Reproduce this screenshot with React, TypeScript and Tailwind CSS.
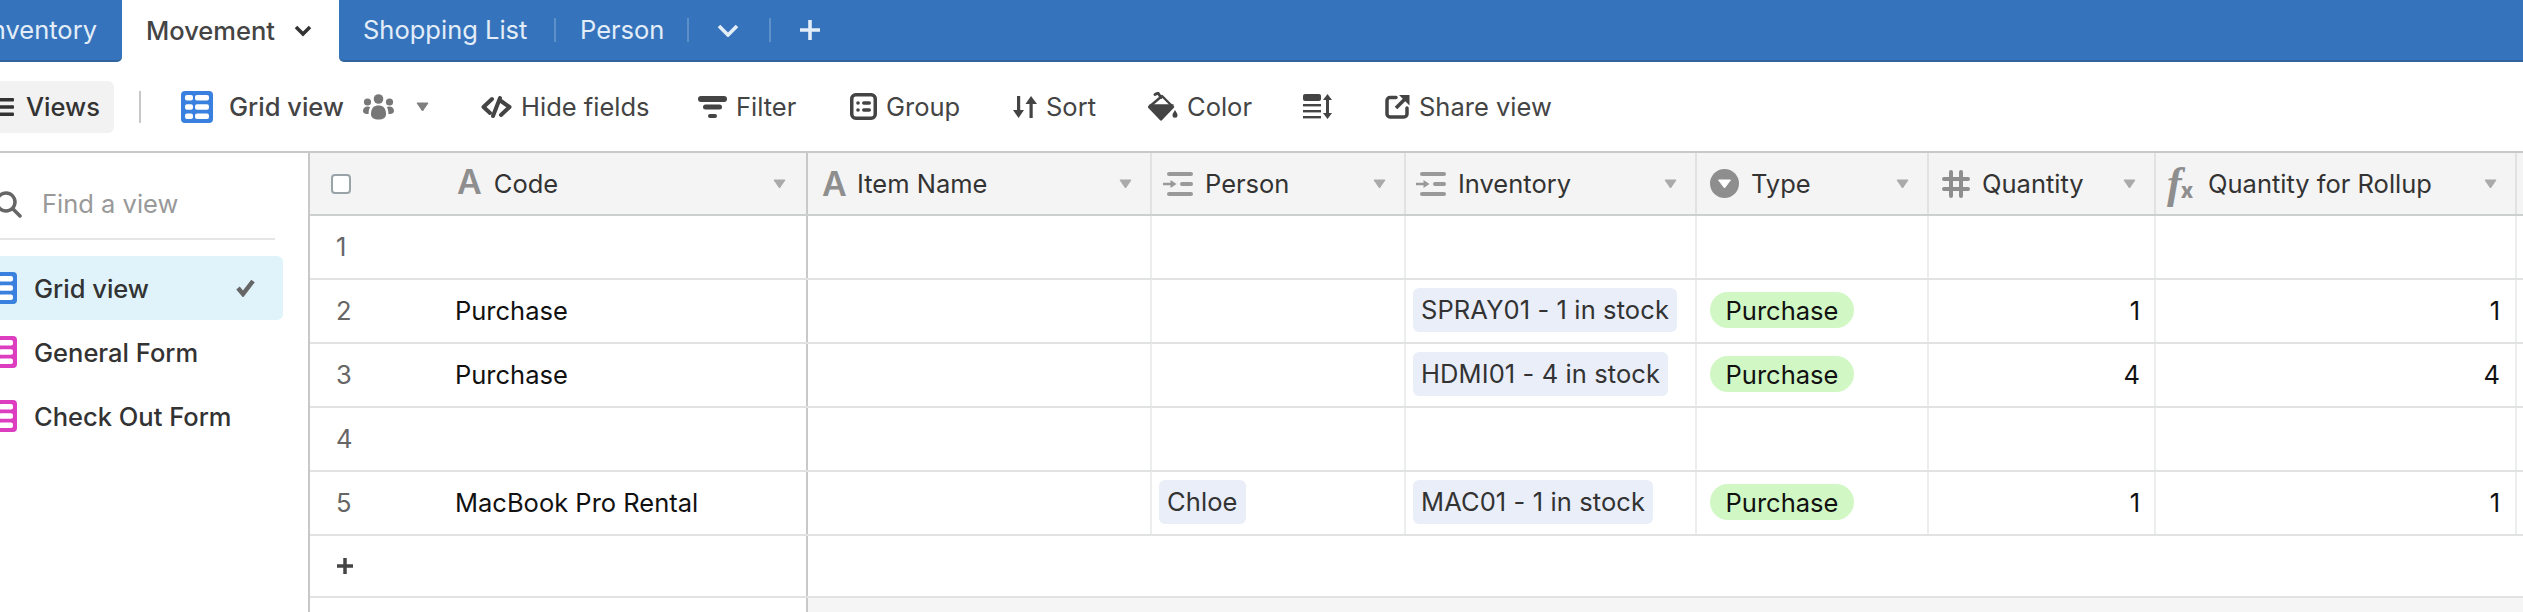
import type { ReactNode } from 'react';

const Caret = ({ color = '#aaaaaa' }: { color?: string }) => (
    <svg width="13" height="10" viewBox="0 0 13 10" className="shrink-0">
        <path d="M1 1h11L6.5 9z" fill={color} stroke={color} strokeWidth="1" strokeLinejoin="round" />
    </svg>
);

const GridIcon = ({ color }: { color: string }) => (
    <svg width="32" height="32" viewBox="0 0 32 32" className="shrink-0">
        <rect width="32" height="32" rx="4" fill={color} />
        <g fill="#fff">
            <rect x="4" y="4" width="8" height="5.500" rx="2" />
            <rect x="14" y="4" width="14" height="5.500" rx="2" />
            <rect x="4" y="13.250" width="8" height="5.500" rx="2" />
            <rect x="14" y="13.250" width="14" height="5.500" rx="2" />
            <rect x="4" y="22.500" width="8" height="5.500" rx="2" />
            <rect x="14" y="22.500" width="14" height="5.500" rx="2" />
        </g>
    </svg>
);

const UsersIcon = () => (
    <svg width="31" height="26" viewBox="0 0 31 26" fill="#777777" className="shrink-0">
        <circle cx="15.5" cy="5" r="4.8" />
        <circle cx="4.5" cy="8" r="3.6" />
        <circle cx="26.5" cy="8" r="3.6" />
        <path d="M8 20c0-6 3-8.500 7.500-8.500S23 14 23 20c0 4-3 5.500-7.500 5.500S8 24 8 20z" />
        <path d="M0 17c0-3 2-4.500 4.500-4.500 1.200 0 2 .3 2.700 .8C6 15 5.600 17 5.600 20c-3 0-5.600-.5-5.600-3z" />
        <path d="M31 17c0-3-2-4.500-4.500-4.500-1.200 0-2 .3-2.700 .8C25 15 25.400 17 25.400 20c3 0 5.600-.5 5.600-3z" />
    </svg>
);

const HideIcon = () => (
    <svg width="31" height="22" viewBox="0 0 31 22" fill="none" stroke="#444444" strokeWidth="4" strokeLinejoin="round" strokeLinecap="round" className="shrink-0">
        <path d="M11 3 2.500 11 9 17" />
        <path d="M20 5 28.500 11 20 19" />
        <path d="M19 2 12 20" />
    </svg>
);

const FilterIcon = () => (
    <svg width="29" height="22" viewBox="0 0 29 22" fill="#444444" className="shrink-0">
        <rect x="0" y="0" width="29" height="6" rx="3" />
        <rect x="5" y="8.500" width="19" height="5" rx="2.500" />
        <rect x="10" y="18" width="9" height="4" rx="2" />
    </svg>
);

const GroupIcon = () => (
    <svg width="27" height="27" viewBox="0 0 27 27" className="shrink-0">
        <rect x="1.750" y="1.750" width="23.500" height="23.500" rx="4" fill="none" stroke="#444444" strokeWidth="3.500" />
        <g fill="#444444">
            <circle cx="8" cy="10" r="1.800" />
            <circle cx="8" cy="17" r="1.800" />
            <rect x="12" y="8.200" width="9" height="3.600" rx="1.800" />
            <rect x="12" y="15.200" width="9" height="3.600" rx="1.800" />
        </g>
    </svg>
);

const SortIcon = () => (
    <svg width="24" height="24" viewBox="0 0 24 24" fill="#444444" className="shrink-0">
        <path d="M4 1h3.200v14H11l-5.400 8L0 15h4z" />
        <path d="M16.500 23h3.200V9H24L18 1l-5.500 8h4z" />
    </svg>
);

const ColorIcon = () => (
    <svg width="30" height="29" viewBox="0 0 30 29" className="shrink-0">
        <path d="M7 2.500 10 1l3 4.500" fill="none" stroke="#444444" strokeWidth="2.800" strokeLinecap="round" strokeLinejoin="round" />
        <path d="M14 4 25 15 13 27.500 1 15z" fill="none" stroke="#444444" strokeWidth="2.400" strokeLinejoin="round" />
        <path d="M2 13h23L13 27.500z" fill="#444444" stroke="#444444" strokeWidth="1.500" strokeLinejoin="round" />
        <path d="M27 18c1.500 2.500 2.500 3.700 2.500 5.200a2.500 2.500 0 0 1-5 0c0-1.500 1-2.700 2.500-5.200z" fill="#444444" />
    </svg>
);

const RowHeightIcon = () => (
    <svg width="29" height="25" viewBox="0 0 29 25" fill="#444444" className="shrink-0">
        <rect x="0" y="0" width="18" height="7" rx="2" />
        <rect x="0" y="10" width="18" height="2.400" />
        <rect x="0" y="16" width="18" height="2.400" />
        <rect x="0" y="22" width="18" height="2.400" />
        <path d="M24.500 0 29 6h-3v13h3l-4.500 6L20 19h3V6h-3z" />
    </svg>
);

const ShareIcon = () => (
    <svg width="25" height="25" viewBox="0 0 25 25" fill="none" stroke="#444444" className="shrink-0">
        <path d="M11 3.500H5a3 3 0 0 0-3 3V20a3 3 0 0 0 3 3h14a3 3 0 0 0 3-3v-6" strokeWidth="3.500" strokeLinecap="round" />
        <path d="M11 14 20 5" strokeWidth="3.600" />
        <path d="M14 1h10.500v10.500z" fill="#444444" stroke="none" />
    </svg>
);

const LinkIcon = () => (
    <svg width="30" height="24" viewBox="0 0 30 24" fill="#999999" className="shrink-0">
        <rect x="4" y="0" width="26" height="4" rx="2" />
        <rect x="17" y="10" width="13" height="4" rx="2" />
        <rect x="4" y="20" width="26" height="4" rx="2" />
        <path d="M0 10.800h7.500V8l6 4-6 4v-2.800H0z" />
    </svg>
);

const SelectIcon = () => (
    <svg width="29" height="29" viewBox="0 0 29 29" className="shrink-0">
        <circle cx="14.500" cy="14.500" r="14.500" fill="#8e8e8e" />
        <path d="M8.500 11h12l-6 8z" fill="#fff" stroke="#fff" strokeWidth="1" strokeLinejoin="round" />
    </svg>
);

const HashIcon = () => (
    <svg width="28" height="28" viewBox="0 0 28 28" fill="none" stroke="#8e8e8e" strokeWidth="4" strokeLinecap="round" className="shrink-0">
        <path d="M9 2v24M19 2v24M2 9h24M2 19h24" />
    </svg>
);

const TextIcon = () => (
    <span className="w-[23px] shrink-0 text-[34px] leading-none font-semibold text-[#8e8e8e]">A</span>
);

const FormulaIcon = () => (
    <span className="w-[29px] shrink-0 flex items-baseline text-[#8e8e8e] leading-none">
        <span className="font-['Liberation_Serif',serif] italic font-bold text-[44px]">f</span>
        <span className="-ml-[1px] font-extrabold text-[21px]">x</span>
    </span>
);

function Tool({ w, icon, label }: { w: string; icon: ReactNode; label?: string }) {
    return (
        <div className={`${w} flex items-center gap-[9px] text-[#444444]`}>
            {icon}
            {label && <span className="pt-[1px]">{label}</span>}
        </div>
    );
}

function Head({ cls, icon, label }: { cls: string; icon: ReactNode; label: string }) {
    return (
        <div className={`${cls} flex items-center pr-[18px] border-r-2 border-[#e1e3e3]`}>
            {icon}
            <span className="ml-[12px] pt-[2px] text-[#333333]">{label}</span>
            <span className="ml-auto"><Caret /></span>
        </div>
    );
}

const Chip = ({ text }: { text: string }) => (
    <span className="-mt-[2px] h-[44px] px-[8px] pt-[1px] flex items-center rounded-[6px] bg-[#e9eef8] text-[#333333] tracking-[0.1px] whitespace-nowrap">{text}</span>
);

const Pill = () => (
    <span className="-mt-[2px] h-[36px] w-[144px] pt-[2px] flex items-center justify-center rounded-full bg-[#d1f7c4] text-[#111111]">Purchase</span>
);

const rows = [
    { n: 1 },
    { n: 2, code: 'Purchase', inv: 'SPRAY01 - 1 in stock', qty: 1 },
    { n: 3, code: 'Purchase', inv: 'HDMI01 - 4 in stock', qty: 4 },
    { n: 4 },
    { n: 5, code: 'MacBook Pro Rental', person: 'Chloe', inv: 'MAC01 - 1 in stock', qty: 1 },
];

const views = [
    { name: 'Grid view', color: '#3a80de', active: true },
    { name: 'General Form', color: '#dd3ec0' },
    { name: 'Check Out Form', color: '#dd3ec0' },
];

const cellLine = 'border-r-2 border-[#eceeee]';

export default function App() {
    return (
        <div className="w-[2523px] h-[612px] overflow-hidden bg-white text-[25.5px] font-['Inter','Liberation_Sans',sans-serif] flex flex-col">
            {/* tabs */}
            <div className="h-[62px] flex shrink-0 text-[#e3edf8]">
                <div className="w-[122px] bg-[#3574bc] border-b-2 border-[#2e659f] rounded-br-[5px] flex items-center justify-end pr-[25px] overflow-hidden">
                    <span>Inventory</span>
                </div>
                <div className="w-[217px] bg-white flex items-center pl-[24px] text-[#444444] font-medium rounded-t-[4px]">
                    <span>Movement</span>
                    <svg width="18" height="12" viewBox="0 0 18 12" fill="none" stroke="#333333" strokeWidth="3.500" className="ml-auto mr-[27px]">
                        <path d="M2 2l7 7 7-7" />
                    </svg>
                </div>
                <div className="flex-1 bg-[#3574bc] border-b-2 border-[#2e659f] rounded-bl-[5px] flex items-center pl-[24px]">
                    <span className="w-[191px]">Shopping List</span>
                    <span className="w-[2px] h-[24px] bg-[#5d90c9]" />
                    <span className="ml-[24px] w-[107px]">Person</span>
                    <span className="w-[2px] h-[24px] bg-[#5d90c9]" />
                    <svg width="22" height="13" viewBox="0 0 22 13" fill="none" stroke="#e3edf8" strokeWidth="3.600" className="ml-[28px]">
                        <path d="M2 2l9 9 9-9" />
                    </svg>
                    <span className="ml-[30px] w-[2px] h-[24px] bg-[#5d90c9]" />
                    <svg width="20" height="20" viewBox="0 0 20 20" stroke="#e3edf8" strokeWidth="3.600" className="ml-[29px]">
                        <path d="M10 0v20M0 10h20" />
                    </svg>
                </div>
            </div>

            {/* toolbar */}
            <div className="h-[89px] flex items-center shrink-0">
                <div className="-ml-[20px] w-[134px] h-[52px] bg-[#f2f2f2] rounded-[6px] flex items-center pl-[14px] gap-[12px] font-medium text-[#333333]">
                    <svg width="20" height="18" viewBox="0 0 20 18" fill="#333333" className="shrink-0">
                        <rect y="0" width="20" height="3.600" rx="1" />
                        <rect y="7.200" width="20" height="3.600" rx="1" />
                        <rect y="14.400" width="20" height="3.600" rx="1" />
                    </svg>
                    <span className="pt-[1px]">Views</span>
                </div>
                <span className="ml-[25px] w-[2px] h-[32px] bg-[#c8c8c8]" />
                <div className="ml-[40px] w-[300px] flex items-center text-[#444444]">
                    <GridIcon color="#3a80de" />
                    <span className="ml-[16px] pt-[1px] font-medium">Grid view</span>
                    <span className="ml-[19px]"><UsersIcon /></span>
                    <span className="ml-[22px]"><Caret color="#808080" /></span>
                </div>
                <Tool w="w-[217px]" icon={<HideIcon />} label="Hide fields" />
                <Tool w="w-[152px]" icon={<FilterIcon />} label="Filter" />
                <Tool w="w-[163px]" icon={<GroupIcon />} label="Group" />
                <Tool w="w-[135px]" icon={<SortIcon />} label="Sort" />
                <Tool w="w-[155px]" icon={<ColorIcon />} label="Color" />
                <Tool w="w-[82px]" icon={<RowHeightIcon />} />
                <Tool w="w-[190px]" icon={<ShareIcon />} label="Share view" />
            </div>

            {/* content */}
            <div className="flex-1 flex border-t-2 border-[#c8c8c8] min-h-0">
                <aside className="w-[308px] shrink-0 overflow-hidden">
                    <div className="mt-[22px] h-[58px] -ml-[6px] flex items-center gap-[20px] text-[#999999]">
                        <svg width="28" height="28" viewBox="0 0 28 28" fill="none" stroke="#666666" strokeWidth="3.500" strokeLinecap="round" className="shrink-0">
                            <circle cx="12" cy="12" r="9" />
                            <path d="M19 19l7 7" />
                        </svg>
                        <span>Find a view</span>
                    </div>
                    <div className="mt-[5px] h-[2px] w-[275px] bg-[#e6e6e6]" />
                    <div className="mt-[16px] flex flex-col">
                        {views.map(v => (
                            <div key={v.name} className={`h-[64px] w-[283px] flex items-center pl-[34px] relative rounded-r-[6px] font-medium text-[#333333] ${v.active ? 'bg-[#e0f3fb]' : ''}`}>
                                <span className="absolute -left-[15px] top-[16px]"><GridIcon color={v.color} /></span>
                                <span className="pt-[2px]">{v.name}</span>
                                {v.active && (
                                    <svg width="19" height="18" viewBox="0 0 19 18" fill="none" stroke="#666666" strokeWidth="4.500" className="ml-auto mr-[28px]">
                                        <path d="M2 9l5 6L17 2" />
                                    </svg>
                                )}
                            </div>
                        ))}
                    </div>
                </aside>

                <div className="flex-1 min-w-0 flex flex-col border-l-2 border-[#c8c8c8]">
                    {/* header */}
                    <div className="h-[63px] shrink-0 flex bg-[#f4f4f4] border-b-2 border-[#cdd0d0]">
                        <div className="w-[498px] shrink-0 flex items-center pl-[21px] pr-[20px] border-r-2 border-[#c8c8c8]">
                            <span className="w-[20px] h-[20px] rounded-[4px] border-2 border-[#9aa4a8] bg-white shrink-0" />
                            <span className="ml-[106px] pt-[2px]"><TextIcon /></span>
                            <span className="ml-[12px] pt-[2px] text-[#333333]">Code</span>
                            <span className="ml-auto"><Caret /></span>
                        </div>
                        <Head cls="w-[344px] shrink-0 pl-[14px]" icon={<TextIcon />} label="Item Name" />
                        <Head cls="w-[254px] shrink-0 pl-[11px]" icon={<LinkIcon />} label="Person" />
                        <Head cls="w-[291px] shrink-0 pl-[10px]" icon={<LinkIcon />} label="Inventory" />
                        <Head cls="w-[232px] shrink-0 pl-[13px]" icon={<SelectIcon />} label="Type" />
                        <Head cls="w-[227px] shrink-0 pl-[13px]" icon={<HashIcon />} label="Quantity" />
                        <Head cls="w-[361px] shrink-0 pl-[11px]" icon={<FormulaIcon />} label="Quantity for Rollup" />
                    </div>

                    {/* rows */}
                    {rows.map(r => (
                        <div key={r.n} className="h-[64px] shrink-0 flex border-b-2 border-[#e1e3e3] text-[#111111]">
                            <div className="w-[498px] shrink-0 flex items-center pt-[1px] border-r-2 border-[#c8c8c8]">
                                <span className="w-[145px] shrink-0 pl-[26px] text-[#666666]">{r.n}</span>
                                <span>{r.code}</span>
                            </div>
                            <div className={`w-[344px] shrink-0 ${cellLine}`} />
                            <div className={`w-[254px] shrink-0 flex items-center pl-[7px] ${cellLine}`}>
                                {r.person && <Chip text={r.person} />}
                            </div>
                            <div className={`w-[291px] shrink-0 flex items-center pl-[7px] ${cellLine}`}>
                                {r.inv && <Chip text={r.inv} />}
                            </div>
                            <div className={`w-[232px] shrink-0 flex items-center pl-[13px] ${cellLine}`}>
                                {r.inv && <Pill />}
                            </div>
                            <div className={`w-[227px] shrink-0 flex items-center justify-end pt-[1px] pr-[14px] ${cellLine}`}>{r.qty}</div>
                            <div className={`w-[361px] shrink-0 flex items-center justify-end pt-[1px] pr-[15px] ${cellLine}`}>{r.qty}</div>
                        </div>
                    ))}

                    {/* add row */}
                    <div className="h-[62px] shrink-0 flex border-b-2 border-[#e1e3e3]">
                        <div className="w-[498px] shrink-0 flex items-center pl-[27px] border-r-2 border-[#c8c8c8]">
                            <svg width="16" height="16" viewBox="0 0 16 16" stroke="#444444" strokeWidth="3.500">
                                <path d="M8 0v16M0 8h16" />
                            </svg>
                        </div>
                    </div>

                    {/* summary bar */}
                    <div className="flex-1 flex">
                        <div className="w-[498px] shrink-0 border-r-2 border-[#c8c8c8]" />
                        <div className="flex-1 bg-[#f5f5f5]" />
                    </div>
                </div>
            </div>
        </div>
    );
}
